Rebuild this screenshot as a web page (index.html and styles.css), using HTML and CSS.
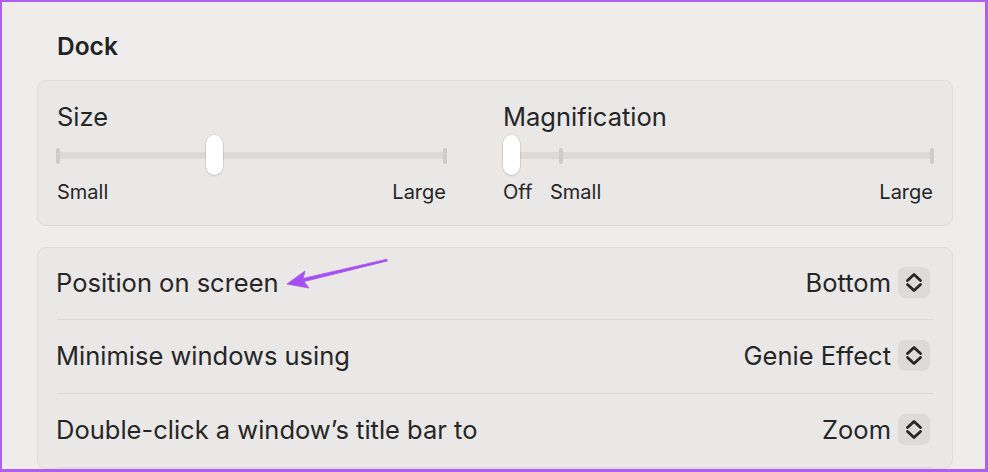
FILE: index.html
```html
<!DOCTYPE html>
<html>
<head>
<meta charset="utf-8">
<link rel="stylesheet" href="styles.css">
</head>
<body>
<div class="frame">
  <h1 class="title">Dock</h1>
  <section class="card sliders">
    <div class="col col-size">
      <div class="heading">Size</div>
      <div class="slider">
        <div class="track"></div>
        <span class="tick tick-start"></span>
        <span class="tick tick-end"></span>
        <span class="thumb thumb-size"></span>
      </div>
      <div class="labels">
        <span>Small</span>
        <span class="push">Large</span>
      </div>
    </div>
    <div class="col col-mag">
      <div class="heading">Magnification</div>
      <div class="slider">
        <div class="track"></div>
        <span class="tick tick-small"></span>
        <span class="tick tick-end"></span>
        <span class="thumb thumb-mag"></span>
      </div>
      <div class="labels">
        <span class="off">Off</span>
        <span>Small</span>
        <span class="push">Large</span>
      </div>
    </div>
  </section>
  <section class="card list">
    <div class="row">
      <span class="row-label">Position on screen</span>
      <span class="select">Bottom<span class="stepper"><svg viewBox="0 0 32 31" width="32" height="31"><path d="M9.5 13.5 L16 7.5 L22.5 13.5 M9.5 17.5 L16 23.5 L22.5 17.5" fill="none" stroke="#262626" stroke-width="2.8" stroke-linecap="round" stroke-linejoin="round"/></svg></span></span>
    </div>
    <div class="row">
      <span class="row-label">Minimise windows using</span>
      <span class="select">Genie Effect<span class="stepper"><svg viewBox="0 0 32 31" width="32" height="31"><path d="M9.5 13.5 L16 7.5 L22.5 13.5 M9.5 17.5 L16 23.5 L22.5 17.5" fill="none" stroke="#262626" stroke-width="2.8" stroke-linecap="round" stroke-linejoin="round"/></svg></span></span>
    </div>
    <div class="row">
      <span class="row-label">Double-click a window’s title bar to</span>
      <span class="select">Zoom<span class="stepper"><svg viewBox="0 0 32 31" width="32" height="31"><path d="M9.5 13.5 L16 7.5 L22.5 13.5 M9.5 17.5 L16 23.5 L22.5 17.5" fill="none" stroke="#262626" stroke-width="2.8" stroke-linecap="round" stroke-linejoin="round"/></svg></span></span>
    </div>
  </section>
  <svg class="arrow" viewBox="0 0 112 40" width="112" height="40">
    <path d="M7 30 L25 17 L23.1 24.4 L106.9 5.3 L107.3 6.9 L23.9 27.6 L29 34 Z" fill="#a54ff2" stroke="#a54ff2" stroke-width="0.8" stroke-linejoin="round"/>
  </svg>
</div>
</body>
</html>
```

FILE: styles.css
```css
html, body {
  margin: 0;
  padding: 0;
}
body {
  font-family: Inter, "Open Sans", sans-serif;
  color: #262626;
}
.frame {
  position: relative;
  width: 988px;
  height: 472px;
  box-sizing: border-box;
  border-style: solid;
  border-color: #ae5ff0;
  border-width: 2px 3px 3px 2px;
  background: #eeedec;
  padding: 0 32px 0 35px;
  overflow: hidden;
}
.title {
  margin: 0;
  padding: 29px 0 0 20px;
  height: 49px;
  font-size: 24.5px;
  line-height: 30px;
  font-weight: 600;
  color: #222;
}
.card {
  background: #e9e8e7;
  border: 1px solid #dddcdb;
  border-radius: 9px;
}
.sliders {
  display: grid;
  grid-template-columns: 389px 1fr;
  column-gap: 57px;
  padding: 21px 19px 21px 19px;
}
.heading {
  font-size: 25.5px;
  line-height: 30px;
}
.slider {
  position: relative;
  height: 48px;
}
.track {
  position: absolute;
  left: 0;
  right: 0;
  top: 20px;
  height: 7px;
  background: #dbdad9;
  border-radius: 2px;
}
.tick {
  position: absolute;
  top: 16px;
  width: 4px;
  height: 16px;
  border-radius: 2px;
  background: #cdcccb;
}
.tick-start { left: -1px; }
.tick-end { right: -1px; }
.tick-small { left: 56px; }
.thumb {
  position: absolute;
  top: 3px;
  width: 17px;
  height: 40px;
  border-radius: 9px;
  background: #ffffff;
  box-shadow: 0 0 0 0.5px rgba(0,0,0,0.12), 0 1px 2px rgba(0,0,0,0.12);
}
.thumb-size { left: 149px; }
.thumb-mag { left: 0; }
.labels {
  display: flex;
  font-size: 20px;
  line-height: 23px;
  padding-top: 1px;
}
.labels .push { margin-left: auto; }
.labels .off { width: 47px; }
.list {
  margin-top: 21px;
  padding: 0 19px;
}
.row {
  display: flex;
  align-items: center;
  justify-content: space-between;
  box-sizing: border-box;
  height: 74px;
  padding-bottom: 2px;
  border-bottom: 1px solid #dad9d8;
  font-size: 25.5px;
}
.row:first-child { height: 72px; }
.row-label { margin-left: -1px; }
.select {
  display: flex;
  align-items: center;
}
.stepper {
  display: flex;
  width: 32px;
  height: 31px;
  margin-left: 7px;
  margin-right: 3px;
  border-radius: 7px;
  background: #dcdbda;
}
.stepper svg { display: block; }
.arrow {
  position: absolute;
  left: 278px;
  top: 252px;
}
```
